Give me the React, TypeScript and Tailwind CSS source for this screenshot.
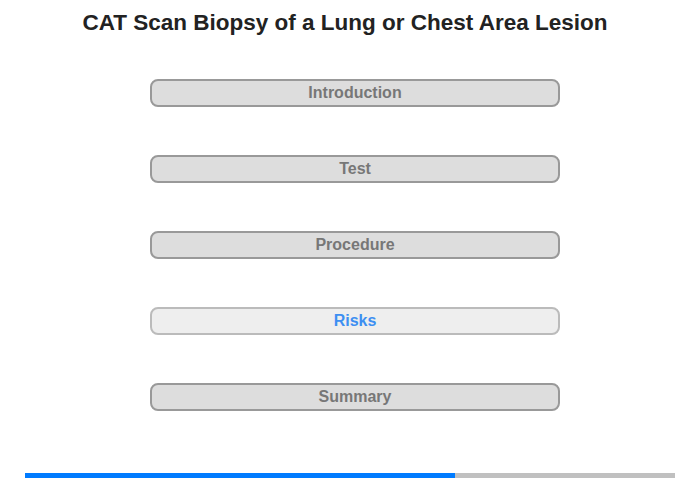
import React from "react";

const sections = ["Introduction", "Test", "Procedure", "Risks", "Summary"];

export default function App() {
  const current = "Risks";

  return (
    <div className="w-[700px] h-[480px] bg-white font-[family-name:'Liberation_Sans',Arial,sans-serif]">
      <h1 className="pt-[10px] pr-[10px] text-center text-[22.5px] leading-[26px] font-bold text-[#222]">
        CAT Scan Biopsy of a Lung or Chest Area Lesion
      </h1>

      <div className="ml-[150px] mt-[43px] flex w-[410px] flex-col gap-[48px]">
        {sections.map((s) =>
          s === current ? (
            <div
              key={s}
              className="flex h-[28px] items-center justify-center rounded-[8px] border-2 border-[#bbb] bg-[#eee] text-[16px] font-bold text-[#3d8ff2]"
            >
              {s}
            </div>
          ) : (
            <div
              key={s}
              className="flex h-[28px] items-center justify-center rounded-[8px] border-2 border-[#999] bg-[#ddd] text-[16px] font-bold text-[#777]"
            >
              {s}
            </div>
          )
        )}
      </div>

      <div className="mx-[25px] mt-[62px] flex h-[5px]">
        <div className="w-[430px] bg-[#007bff]" />
        <div className="flex-1 bg-[#c0c0c0]" />
      </div>
    </div>
  );
}
